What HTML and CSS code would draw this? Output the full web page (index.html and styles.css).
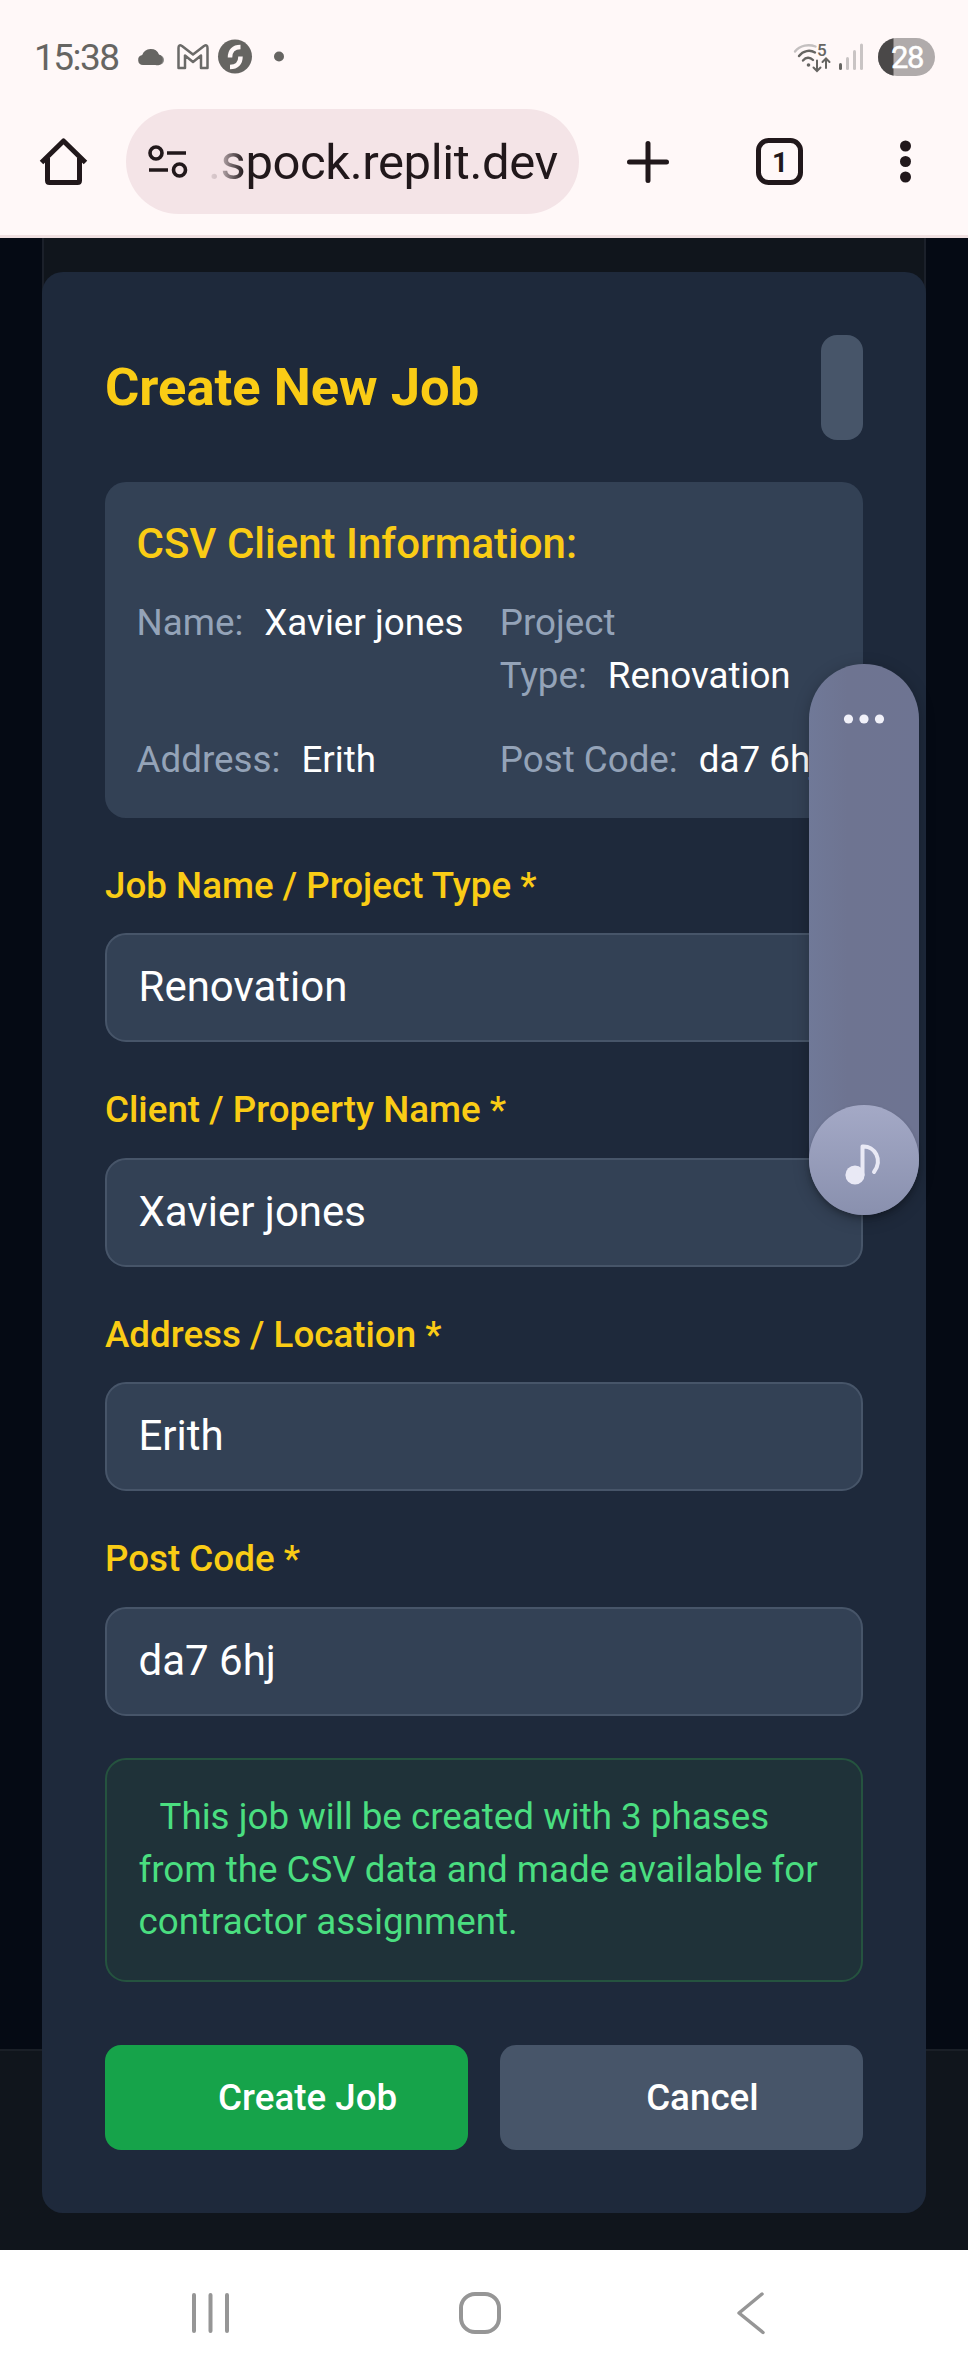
FILE: index.html
```html
<!DOCTYPE html>
<html lang="en">
<head>
<meta charset="utf-8">
<title>Create New Job</title>
<link rel="stylesheet" href="styles.css">
</head>
<body>
<div class="phone">
  <header class="chrome">
    <div class="status">
      <span class="clock">15:38</span>
      <svg class="notif" width="150" height="36" viewBox="0 0 150 36">
        <path d="M14 26h7a5 5 0 0 0 0-10h-7z" fill="#8b8a88"/>
        <path d="M5 26a5 5 0 0 1-.8-9.900A9 9 0 0 1 21 15.500 5.500 5.500 0 0 1 17.500 26z" fill="#666562"/>
        <path d="M40.500 29V9q0-4 3.500-2L55 15.500 66 7q3.500-2 3.500 2v20h-6.500V16.500L55 23l-8-6.500V29z" fill="none" stroke="#6b6a68" stroke-width="2.500" stroke-linejoin="round"/>
        <circle cx="97" cy="17.500" r="17" fill="#666562"/>
        <path d="M102.500 8c-7 0-10.500 4-10.500 10.500M92 28c7 0 10.500-4 10.500-10.500" fill="none" stroke="#fff8f8" stroke-width="4.500"/>
        <circle cx="141" cy="17.500" r="5" fill="#666562"/>
      </svg>
      <span class="spacer"></span>
      <svg class="signals" width="142" height="38" viewBox="0 0 142 38">
        <defs><clipPath id="charge"><rect x="85" y="0" width="15.500" height="38"/></clipPath></defs>
        <g fill="none" stroke-width="2.400" stroke-linecap="round">
          <path d="M2 13.500C7 7 16 6 22.500 8.500" stroke="#c4c0c0"/>
          <path d="M6 18c4-5.500 11-6.500 16-3.500M10 22.500c3-3.500 7-3.500 10-.5" stroke="#666562"/>
          <path d="M24 22.500v10M20.500 29.500l3.500 3.500 3.500-3.500M33 30V21M29.500 24l3.500-3.500 3.500 3.500" stroke="#666562" stroke-width="2"/>
        </g>
        <circle cx="15.500" cy="27" r="1.800" fill="#666562"/>
        <text x="24" y="18" class="tiny">5</text>
        <rect x="46" y="25" width="3" height="7" rx="1.500" fill="#666562"/>
        <g fill="#c9c4c4"><rect x="53" y="19" width="3" height="13" rx="1.500"/><rect x="60" y="12" width="3" height="20" rx="1.500"/><rect x="67" y="5.500" width="3" height="26.500" rx="1.500"/></g>
        <rect x="85" y="0" width="57" height="38" rx="19" fill="#b0abab"/>
        <rect x="85" y="0" width="57" height="38" rx="19" fill="#4a4848" clip-path="url(#charge)"/>
        <text x="98" y="29.500" class="battery">28</text>
      </svg>
    </div>
    <div class="toolbar">
      <svg class="home" width="48" height="48" viewBox="0 0 48 48">
        <path d="M2.500 24.500 24.500 3l22 21.500M8.500 20v22.500q0 2 2 2h28q2 0 2-2V20" fill="none" stroke="#21181b" stroke-width="5" stroke-linejoin="round"/>
      </svg>
      <div class="url">
        <svg width="40" height="34" viewBox="0 0 40 34" fill="none" stroke="#21181b" stroke-width="3.600">
          <circle cx="8" cy="8" r="6"/><path d="M19 8h19M1 25h19"/><circle cx="31.500" cy="25" r="6"/>
        </svg>
        <span class="address">.spock.replit.dev</span>
      </div>
      <svg class="actions" width="290" height="48" viewBox="0 0 290 48">
        <path d="M24 5.500v37M5.500 24h37" stroke="#21181b" stroke-width="5" stroke-linecap="round"/>
        <rect x="134.500" y="2.500" width="42" height="42" rx="10" fill="none" stroke="#21181b" stroke-width="5"/>
        <text x="156" y="34" class="tabs" text-anchor="middle">1</text>
        <g fill="#21181b"><circle cx="281.500" cy="8" r="5.500"/><circle cx="281.500" cy="23.500" r="5.500"/><circle cx="281.500" cy="39" r="5.500"/></g>
      </svg>
    </div>
  </header>

  <main class="page">
    <section class="modal">
      <div class="modal-head">
        <h1>Create New Job</h1>
        <button class="close" aria-label="Close"></button>
      </div>
      <div class="info">
        <h2>CSV Client Information:</h2>
        <div class="info-grid">
          <div>Name:<span class="value">Xavier jones</span></div>
          <div>Project Type:<span class="value">Renovation</span></div>
          <div>Address:<span class="value">Erith</span></div>
          <div>Post Code:<span class="value">da7 6hj</span></div>
        </div>
      </div>
      <div class="field"><label>Job Name / Project Type *</label><div class="input">Renovation</div></div>
      <div class="field"><label>Client / Property Name *</label><div class="input">Xavier jones</div></div>
      <div class="field"><label>Address / Location *</label><div class="input">Erith</div></div>
      <div class="field"><label>Post Code *</label><div class="input">da7 6hj</div></div>
      <p class="notice">This job will be created with 3 phases from the CSV data and made available for contractor assignment.</p>
      <div class="buttons">
        <button class="btn create">Create Job</button>
        <button class="btn cancel">Cancel</button>
      </div>
    </section>
  </main>

  <aside class="volume">
    <svg class="dots" width="42" height="10" viewBox="0 0 42 10" fill="#f1f1f9"><circle cx="5.500" cy="5" r="4.600"/><circle cx="21" cy="5" r="4.600"/><circle cx="36.500" cy="5" r="4.600"/></svg>
    <div class="knob">
      <svg width="36" height="42" viewBox="0 0 36 42">
        <circle cx="9" cy="32" r="9.600" fill="#e9e9f5"/>
        <path d="M16.500 32V3.500C29 2.500 37 17 28 29" fill="none" stroke="#e9e9f5" stroke-width="4" stroke-linecap="round" stroke-linejoin="round"/>
      </svg>
    </div>
  </aside>

  <nav class="nav">
    <svg width="580" height="44" viewBox="0 0 580 44" fill="none" stroke="#969696" stroke-width="4" stroke-linecap="round">
      <path d="M4 4v36M20.500 4v36M37 4v36"/>
      <rect x="271" y="3" width="38" height="38" rx="14"/>
      <path d="M572 3 549 22l24 19.500" stroke-linejoin="round" stroke-width="3.500"/>
    </svg>
  </nav>
</div>
</body>
</html>
```
FILE: styles.css
```css
* { box-sizing: border-box; margin: 0; padding: 0; }
body { font-family: Roboto, sans-serif; background: #fff; }
button { border: 0; font: inherit; }
svg { display: block; flex: none; overflow: visible; }
.phone { position: relative; width: 968px; height: 2376px; display: flex; flex-direction: column; overflow: hidden; }

.chrome { height: 238px; flex: none; background: #fff8f8; border-bottom: 3px solid #f0e0e1; }
.status { height: 109px; padding: 5px 33px 0 34px; display: flex; align-items: center; }
.clock { width: 104px; font-size: 37px; letter-spacing: -1.5px; color: #666562; }
.spacer { flex: 1; }
.tiny { font: 500 17px Roboto, sans-serif; fill: #666562; }
.battery { font: 400 31px Roboto, sans-serif; fill: #fff; stroke: #fff; stroke-width: .5px; letter-spacing: -1.5px; }
.toolbar { height: 105px; display: flex; align-items: center; padding-left: 39px; }
.url { width: 453px; height: 105px; margin-left: 39px; padding-left: 22px; border-radius: 53px; background: #f4e4e7; display: flex; align-items: center; }
.address { margin-left: 20px; padding-top: 2px; font-size: 49px; letter-spacing: -.4px; white-space: nowrap; background: linear-gradient(90deg, #e0d0d3 0, #d0c0c4 10px, #21181b 36px); -webkit-background-clip: text; background-clip: text; color: transparent; }
.actions { margin-left: 44.5px; }
.tabs { font: 700 28px Roboto, sans-serif; fill: #21181b; }

.page { height: 2012px; flex: none; padding: 34px 42px 0;
  background:
    linear-gradient(#1a1f27, #1a1f27) 0 1811px / 100% 2px no-repeat,
    linear-gradient(#10151c, #10151c) 0 1813px / 100% 199px no-repeat,
    linear-gradient(90deg, #1b202a 2px, #10151c 2px 882px, #1b202a 882px) 42px 0 / 884px 100px no-repeat,
    #050a14; }
.modal { height: 1941px; padding: 63px; border-radius: 21px; background: #1e293b; color: #fff; }
.modal-head { display: flex; justify-content: space-between; align-items: center; height: 105px; margin-bottom: 42px; }
h1 { font-size: 52.5px; line-height: 73.5px; font-weight: 700; color: #facc15; }
.close { width: 42px; height: 105px; border-radius: 16px; background: #475569; }
.info { padding: 31.5px; border-radius: 21px; background: #334155; }
h2 { font-size: 42px; line-height: 60px; font-weight: 500; color: #facc15; margin-bottom: 23.9px; }
.info-grid { display: grid; grid-template-columns: 1fr 1fr; gap: 31.5px; font-size: 36.75px; line-height: 52.5px; color: #94a3b8; }
.value { margin-left: 21px; color: #fff; }
.field { margin-top: 42px; }
label { display: block; font-size: 36.75px; line-height: 52.5px; font-weight: 500; color: #facc15; margin-bottom: 21px; }
.input { height: 109px; padding: 20px 31.5px; border: 2px solid #475569; border-radius: 21px; background: #334155; font-size: 42px; line-height: 63px; }
.notice { margin-top: 42px; padding: 31.5px; border: 2px solid #25533f; border-radius: 21px; background: #1f3239; color: #4ade80; font-size: 36.75px; line-height: 52.5px; text-indent: 21px; }
.buttons { margin-top: 63px; display: grid; grid-template-columns: 1fr 1fr; gap: 31.5px; }
.btn { height: 105px; padding-left: 42px; border-radius: 16px; font-size: 36.75px; font-weight: 500; color: #fff; }
.create { background: #16a34a; }
.cancel { background: #475569; }

.volume { position: absolute; left: 809px; top: 664px; width: 110px; height: 551px; border-radius: 55px; background: linear-gradient(90deg, #707998, #6e7491 35%, #6e7492); box-shadow: 0 4px 16px rgba(0,0,0,.25); display: flex; flex-direction: column; justify-content: space-between; align-items: center; padding-top: 50px; }
.knob { width: 110px; height: 110px; padding-top: 8px; border-radius: 50%; background: linear-gradient(#a4a9c6, #8990ae); display: grid; place-items: center; box-shadow: 0 3px 5px rgba(0,0,0,.2); }

.nav { height: 126px; display: flex; align-items: center; padding-left: 189.5px; background: #fff; }
```
